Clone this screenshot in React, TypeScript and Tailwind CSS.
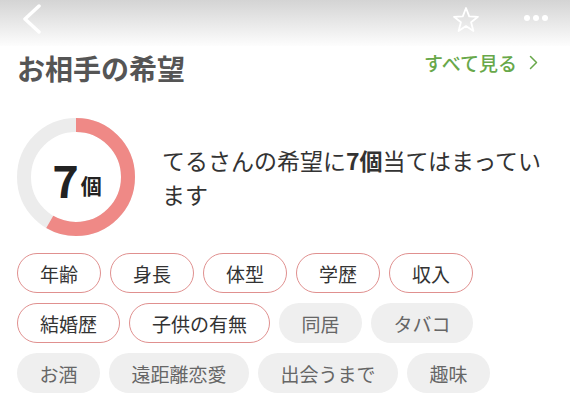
import React from "react";

const pink = ["年齢", "身長", "体型", "学歴", "収入", "結婚歴", "子供の有無"];
const gray = ["同居", "タバコ", "お酒", "遠距離恋愛", "出会うまで", "趣味"];

function Donut() {
  const r = 52;
  const c = 2 * Math.PI * r;
  const frac = 7 / 12;
  return (
    <div className="relative w-[118px] h-[118px] shrink-0">
      <svg width="118" height="118" viewBox="0 0 118 118" className="absolute inset-0">
        <circle cx="59" cy="59" r={r} fill="none" stroke="#ececec" strokeWidth="14" />
        <circle
          cx="59"
          cy="59"
          r={r}
          fill="none"
          stroke="#ef8986"
          strokeWidth="14"
          strokeDasharray={`${c * frac} ${c}`}
          transform="rotate(-90 59 59)"
        />
      </svg>
      <div className="absolute inset-0 flex items-center justify-center pl-[2px] pt-[2px]">
        <span className="text-[45px] font-bold leading-none text-[#222]">7</span>
        <span className="text-[21px] font-bold leading-none text-[#222] mt-[14px] ml-[2px]">個</span>
      </div>
    </div>
  );
}

export default function App() {
  return (
    <div
      className="w-[570px] h-[419px] bg-white overflow-hidden"
      style={{ fontFamily: '"Noto Sans CJK JP", "Noto Sans", sans-serif' }}
    >
      <div className="h-[46px] bg-gradient-to-b from-[#d4d4d4] to-[#fdfdfd] flex items-start justify-between pt-[4px] pl-[21px] pr-[22px]">
        <svg width="22" height="30" viewBox="0 0 22 30">
          <polyline points="18,2 4,15 18,28" fill="none" stroke="white" strokeWidth="3.5" strokeLinecap="round" strokeLinejoin="round" />
        </svg>
        <div className="flex items-start gap-[44px]">
          <svg width="28" height="28" viewBox="0 0 28 28" className="mt-[2px] -ml-[2px]">
            <polygon
              points="14,2 17.2,10.4 26,10.8 19.1,16.3 21.4,25 14,20.1 6.6,25 8.9,16.3 2,10.8 10.8,10.4"
              fill="none"
              stroke="white"
              strokeWidth="1.8"
              strokeLinejoin="round"
            />
          </svg>
          <div className="flex gap-[3px] mt-[11px]">
            <span className="w-[6px] h-[6px] rounded-full bg-white" />
            <span className="w-[6px] h-[6px] rounded-full bg-white" />
            <span className="w-[6px] h-[6px] rounded-full bg-white" />
          </div>
        </div>
      </div>

      <div className="h-[44px] flex items-center justify-between pl-[17px] pr-[32px]">
        <span className="text-[28px] font-bold text-[#555] leading-none">お相手の希望</span>
        <div className="flex items-center gap-[12px] text-[#68a84a] -mt-[12px]">
          <span className="text-[19px] font-medium leading-none">すべて見る</span>
          <svg width="9" height="15" viewBox="0 0 9 15">
            <polyline points="1.5,1.5 7.5,7.5 1.5,13.5" fill="none" stroke="#68a84a" strokeWidth="1.5" strokeLinecap="round" strokeLinejoin="round" />
          </svg>
        </div>
      </div>

      <div className="mt-[28px] flex items-center pl-[17px] pr-[18px]">
        <Donut />
        <p className="ml-[27px] text-[23px] leading-[34px] text-[#333]">
          てるさんの希望に<span className="font-bold">7個</span>当てはまっています
        </p>
      </div>

      <div className="mt-[17px] pl-[17px] pr-[40px] flex flex-wrap gap-x-[9px] gap-y-[10px]">
        {pink.map((t) => (
          <span
            key={t}
            className="h-[40px] px-[22px] flex items-center rounded-full border-[1.5px] border-[#e0908f] text-[19px] text-[#333] leading-none"
          >
            {t}
          </span>
        ))}
        {gray.map((t) => (
          <span
            key={t}
            className="h-[40px] px-[22.5px] flex items-center rounded-full bg-[#efefef] text-[19px] text-[#666] leading-none"
          >
            {t}
          </span>
        ))}
      </div>
    </div>
  );
}
